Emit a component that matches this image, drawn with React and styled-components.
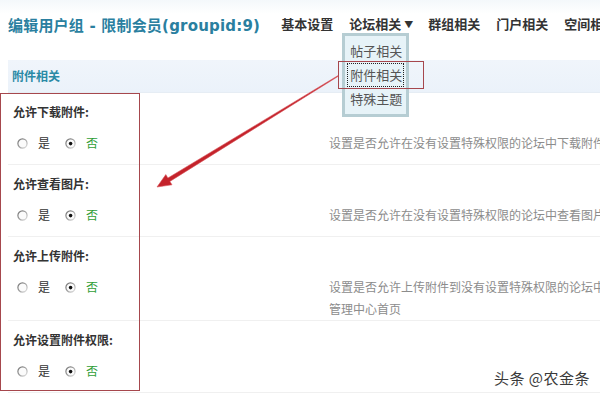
import React from 'react';
import styled, { createGlobalStyle } from 'styled-components';

const GlobalStyle = createGlobalStyle`
  html, body {
    margin: 0;
    padding: 0;
    background: #fff;
    overflow: hidden;
  }
  body {
    font-family: "Liberation Sans", "Noto Sans CJK SC", sans-serif;
    font-size: 12px;
    color: #333;
  }
`;

const settings = [
  { label: '允许下载附件:', desc: ['设置是否允许在没有设置特殊权限的论坛中下载附件'] },
  { label: '允许查看图片:', desc: ['设置是否允许在没有设置特殊权限的论坛中查看图片'] },
  {
    label: '允许上传附件:',
    desc: ['设置是否允许上传附件到没有设置特殊权限的论坛中，需要 PHP 设置支持，请参考', '管理中心首页'],
  },
  { label: '允许设置附件权限:', desc: [] },
];

const navItems = ['基本设置', '论坛相关', '群组相关', '门户相关', '空间相关'];
const menuItems = ['帖子相关', '附件相关', '特殊主题'];

const Page = styled.div`
  position: relative;
  width: 800px;
  height: 400px;
  padding-left: 8px;
  background: linear-gradient(#f4f8fb 0, #fff 14px);
`;

const Header = styled.div`
  display: flex;
  align-items: center;
  height: 48px;
`;

const Title = styled.h1`
  margin: 0 13px 0 0;
  font-family: "DejaVu Sans", "Noto Sans CJK SC", sans-serif;
  font-size: 15px;
  font-weight: bold;
  color: #2a7fa0;
  letter-spacing: 0.2px;
  white-space: nowrap;
`;

const Nav = styled.ul`
  display: flex;
  margin: 0;
  padding: 0;
  list-style: none;
`;

const NavItem = styled.li`
  position: relative;
  padding: 0 ${(p) => (p.$drop ? '7px' : '8px')} 0 8px;
  font-family: "Noto Sans CJK SC", sans-serif;
  font-size: 13px;
  font-weight: bold;
  color: #333;
  white-space: nowrap;
  line-height: 20px;
`;

const Caret = styled.span`
  margin-left: 3px;
  font-size: 9px;
  vertical-align: 1px;
`;

const Menu = styled.ul`
  position: absolute;
  top: 19px;
  left: 1px;
  width: 61px;
  margin: 0;
  padding: 3px 0;
  list-style: none;
  background: #e7f3f8;
  border: 3px solid #b6cdd3;
  z-index: 2;
`;

const MenuItem = styled.li`
  margin: 0 2px;
  padding: 0 3px;
  height: 24px;
  line-height: 24px;
  font-weight: normal;
  color: #555;
  outline: ${(p) => (p.$focus ? '1px dotted #222' : 'none')};
  outline-offset: -1px;
`;

const SectionBar = styled.div`
  margin-top: 12px;
  height: 32px;
  line-height: 32px;
  padding-left: 4px;
  background: linear-gradient(#f0f5fb, #ebf2fa);
  border-bottom: 1px solid #e6edf4;
  font-family: "Noto Sans CJK SC", sans-serif;
  font-size: 12px;
  font-weight: bold;
  color: #2a8aa6;
`;

const Setting = styled.div`
  padding: 10px 0 0 5px;
  border-bottom: 1px solid #f0f0f0;
`;

const Label = styled.div`
  height: 18px;
  line-height: 18px;
  font-family: "Noto Sans CJK SC", sans-serif;
  font-weight: bold;
  color: #333;
`;

const OptionRow = styled.div`
  display: grid;
  grid-template-columns: 316px 1fr;
  margin-top: 11px;
  min-height: 32px;
  line-height: 22px;
`;

const Options = styled.div`
  display: flex;
  align-items: flex-start;
  height: 22px;
  padding-left: 4px;
`;

const Option = styled.label`
  display: flex;
  align-items: center;
  gap: 10px;
  margin-right: 15px;
  font-family: "Noto Sans CJK SC", sans-serif;
  color: ${(p) => (p.$on ? '#2f9e37' : '#333')};
`;

const Desc = styled.div`
  font-family: "Noto Sans CJK SC", sans-serif;
  color: #8c8c8c;
  white-space: nowrap;
`;

const Annotation = styled.div`
  position: absolute;
  left: ${(p) => p.$x}px;
  top: ${(p) => p.$y}px;
  width: ${(p) => p.$w}px;
  height: ${(p) => p.$h}px;
  border: 1px solid #a6474d;
  pointer-events: none;
  z-index: 3;
`;

const ArrowLayer = styled.svg`
  position: absolute;
  left: 0;
  top: 0;
  width: 600px;
  height: 400px;
  pointer-events: none;
  z-index: 3;
`;

const Watermark = styled.div`
  position: absolute;
  left: 494px;
  top: 367px;
  font-family: "Noto Sans CJK SC", sans-serif;
  font-size: 15px;
  color: #3a3a3a;
  text-shadow: 0 0 2px #fff, 1px 1px 0 #fff;
  letter-spacing: 0.5px;
  white-space: nowrap;
`;

const Radio = ({ checked }) => (
  <svg width="11" height="11" viewBox="0 0 11 11">
    <defs>
      <linearGradient id={checked ? 'rg1' : 'rg0'} x1="0" y1="0" x2="1" y2="1">
        <stop offset="0" stopColor="#6f6f6f" />
        <stop offset="0.5" stopColor="#9a9a9a" />
        <stop offset="1" stopColor="#e4e4e4" />
      </linearGradient>
    </defs>
    <circle cx="5.5" cy="5.5" r="4.6" fill="#fbfbfb" stroke={`url(#${checked ? 'rg1' : 'rg0'})`} strokeWidth="1.2" />
    {checked && <circle cx="5.6" cy="5.6" r="1.8" fill="#111" />}
  </svg>
);

export default function App() {
  return (
    <>
      <GlobalStyle />
      <Page>
        <Header>
          <Title>编辑用户组 - 限制会员(groupid:9)</Title>
          <Nav>
            {navItems.map((n, i) => (
              <NavItem key={n} $drop={i === 1}>
                {n}
                {i === 1 && <Caret>▼</Caret>}
                {i === 1 && (
                  <Menu>
                    {menuItems.map((m) => (
                      <MenuItem key={m} $focus={m === '附件相关'}>{m}</MenuItem>
                    ))}
                  </Menu>
                )}
              </NavItem>
            ))}
          </Nav>
        </Header>

        <SectionBar>附件相关</SectionBar>

        {settings.map((s) => (
          <Setting key={s.label}>
            <Label>{s.label}</Label>
            <OptionRow>
              <Options>
                <Option>
                  <Radio />是
                </Option>
                <Option $on>
                  <Radio checked />否
                </Option>
              </Options>
              <Desc>
                {s.desc.map((d) => (
                  <div key={d}>{d}</div>
                ))}
              </Desc>
            </OptionRow>
          </Setting>
        ))}

        <Annotation $x={0} $y={93} $w={138} $h={296} />
        <Annotation $x={338} $y={61} $w={84} $h={26} />

        <ArrowLayer viewBox="0 0 600 400">
          <polygon
            points="338.2,76.3 169.9,181.4 172,184.8 157,187 165.8,174.6 167.9,178 337.8,75.7"
            fill="#c4232b"
            stroke="#d9585e"
            strokeWidth="0.6"
            strokeLinejoin="round"
          />
        </ArrowLayer>

        <Watermark>头条 @农金条</Watermark>
      </Page>
    </>
  );
}
